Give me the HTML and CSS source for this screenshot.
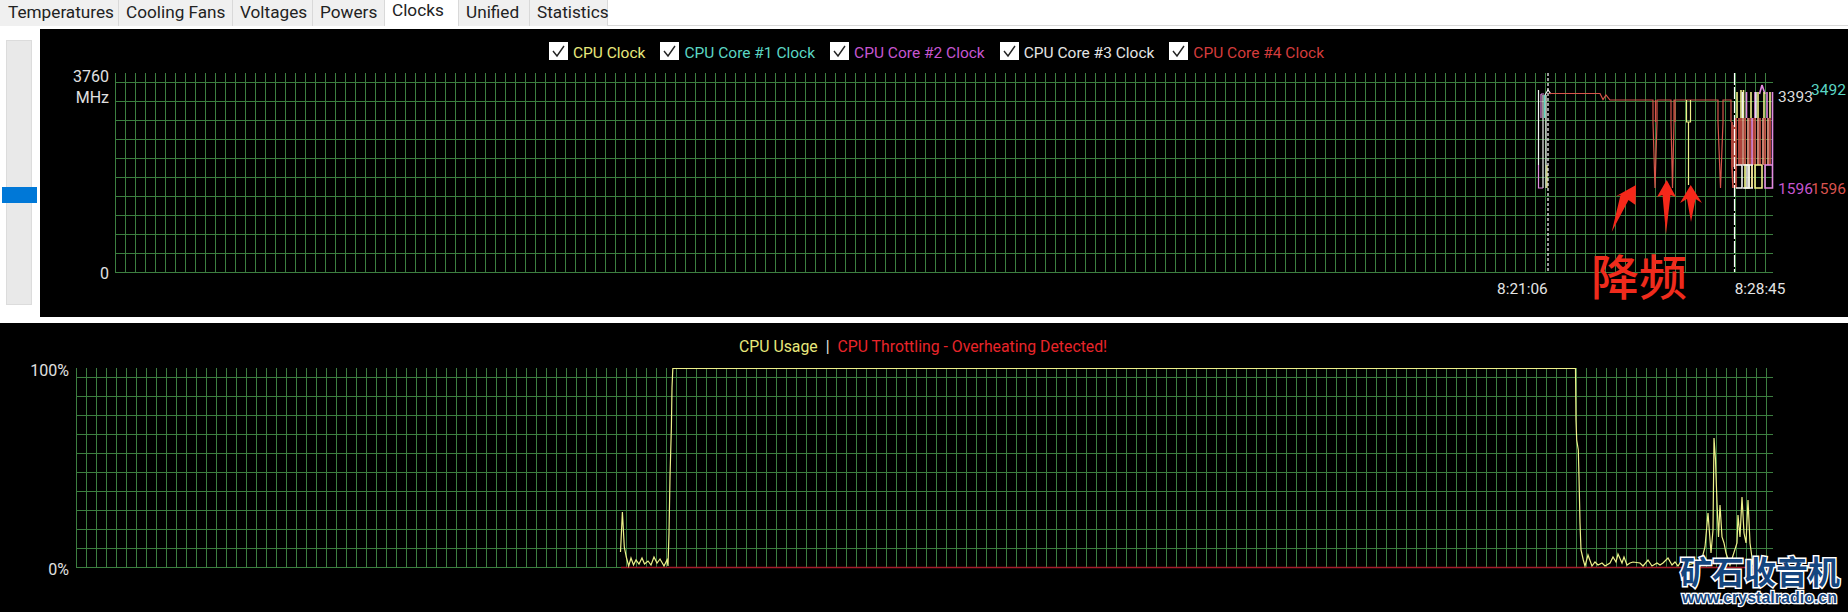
FILE: index.html
```html
<!DOCTYPE html>
<html lang="en">
<head>
  <meta charset="UTF-8">
  <title>Clocks</title>
  <link rel="stylesheet" href="styles.css">
</head>
<body>
  <div class="tabs">
    <div class="tab">Temperatures</div>
    <div class="tab">Cooling Fans</div>
    <div class="tab">Voltages</div>
    <div class="tab">Powers</div>
    <div class="tab active">Clocks</div>
    <div class="tab">Unified</div>
    <div class="tab">Statistics</div>
  </div>

  <div class="clockRow">
    <div class="sliderCol">
      <div class="track"></div>
      <div class="thumb"></div>
    </div>
    <div class="panel clockPanel">
      <div class="legend">
        <span class="item yellow"><svg class="box" viewBox="0 0 19 18"><path d="M4 9l4 5 7-10"/></svg>CPU Clock</span>
        <span class="item cyan"><svg class="box" viewBox="0 0 19 18"><path d="M4 9l4 5 7-10"/></svg>CPU Core #1 Clock</span>
        <span class="item magenta"><svg class="box" viewBox="0 0 19 18"><path d="M4 9l4 5 7-10"/></svg>CPU Core #2 Clock</span>
        <span class="item white"><svg class="box" viewBox="0 0 19 18"><path d="M4 9l4 5 7-10"/></svg>CPU Core #3 Clock</span>
        <span class="item red"><svg class="box" viewBox="0 0 19 18"><path d="M4 9l4 5 7-10"/></svg>CPU Core #4 Clock</span>
      </div>
      <div class="plotRow">
        <div class="yAxis">
          <div>3760</div>
          <div>MHz</div>
          <div class="zero">0</div>
        </div>
        <div class="plot clockPlot">
          <svg class="lines" viewBox="115 73 1658 200">
            <!-- first burst -->
            <path class="l-white" d="M1538.500 90V165M1543 95V188M1546 95V188"/>
            <path class="l-pink" d="M1538.500 165V188H1543M1541 94V118M1544 94H1541"/>
            <path class="l-cyan" d="M1544.500 95V118"/>
            <path class="l-yellow" d="M1547 165V188"/>
            <path class="l-white" d="M1545 95L1548 90L1551 94"/>
            <!-- long flat red run with dips -->
            <path class="l-red" d="M1549 93.500H1600L1603 99.500L1606 95L1610 100H1653V122L1655 188L1657 122V100H1671V122L1672.500 188L1674 122V100H1718V122L1720.500 188L1723 122V100H1731V122"/>
            <path class="l-red" d="M1655.500 100V122M1675 100V122"/>
            <path class="l-yellow" d="M1686.500 100V122H1690.500V100M1688.500 122V185"/>
            <!-- last burst -->
            <g class="burst">
              <path class="l-red" d="M1732 122V167L1733 188M1734 125V167M1736 118V188M1739 118V165M1741 118V165M1745 118V165M1750 118V165M1755 118V165M1760 118V165M1765 118V165M1770 118V165M1753 118V165"/>
              <path class="l-salmon" d="M1743 118V165M1748 118V165M1758 118V165M1763 118V165M1768 118V165"/>
              <path class="l-pink" d="M1746.500 92V118M1755 92V118M1762 85L1759.500 94M1762 85L1765 94M1772.500 92V188H1765V165H1772.500M1752 118V188M1767 92V118"/>
              <path class="l-yellow" d="M1737 92V118M1741 90V118M1743.500 90V118M1751 92V118M1758 92V118M1764 92V118M1770 92V118M1762 165V188H1755V165H1762M1745 165V188H1749V165ZM1752 165V188"/>
              <path class="l-white" d="M1736 165H1742V188H1736M1743 165H1753M1743 188H1753M1747 165V188M1756 92V118M1742.500 92V118M1749 165V188"/>
            </g>
            <path class="l-dash1" d="M1548 73V272"/>
            <path class="l-dash2" d="M1734.500 73V272"/>
            <!-- arrows -->
            <path class="arrow" d="M1636 185L1635.500 205L1628.500 200L1611.700 232L1620.500 195L1615.500 196.500Z"/>
            <path class="arrow" d="M1666.700 180L1676 197L1670.500 195L1666 234L1662.500 195L1657 197Z"/>
            <path class="arrow" d="M1690.700 185L1702 203L1695.500 199L1691 222L1687 199L1680 203Z"/>
          </svg>
          <span class="tag tag-white tag-a">3393</span>
          <span class="tag tag-cyan tag-b">3492</span>
          <span class="tag tag-magenta tag-c">1596</span>
          <span class="tag tag-red tag-d">1596</span>
          <span class="jiangpin">降频</span>
        </div>
      </div>
      <div class="xAxis">
        <span>8:21:06</span>
        <span>8:28:45</span>
      </div>
    </div>
  </div>

  <div class="panel usagePanel">
    <div class="usageTitle">
      <span class="yellow">CPU Usage</span>
      <span class="white">|</span>
      <span class="brightRed">CPU Throttling - Overheating Detected!</span>
    </div>
    <div class="plotRow">
      <div class="yAxis usageAxis">
        <div>100%</div>
        <div class="zero">0%</div>
      </div>
      <div class="plot usagePlot">
        <svg class="lines" viewBox="76 368 1697 200">
          <path class="l-throttle" d="M621 567.500H1773"/>
          <path class="l-usage" d="M620.500 552L622.400 512L624.300 547L626.300 557L628.700 566L631 558L633.500 565L636 560L639 564L642 558L644.500 564L648 561L651 565L654 557L657 563L660 559L664 566L667 560L668 566L669 533L670 477L671.400 427L672 388L672.800 368.500H1575.500L1576 420L1576.700 440L1578.300 450L1579 477L1580 523L1581 550L1583.300 560L1585 566L1588 555L1592 566L1595 562L1598 565L1602 563L1605 566L1610 563L1613 557L1616 562L1618 554L1622 563L1624 557L1627 565L1630 563L1633 562L1640 563L1643 566L1648 560L1652 566L1657 563L1660 565L1663 563L1668 558L1672 565L1675 562L1678 566L1682 560L1687 565L1695 563L1700 566L1705 547L1708 513L1711 553L1713 530L1714 438L1715.500 460L1717 503L1718.500 537L1720 505L1722 537L1724 543L1726 553L1730 565L1737 543L1738 515L1740 537L1742 497L1744 533L1746 543L1748 500L1750 543L1753 565"/>
        </svg>
      </div>
    </div>
  </div>

  <div class="watermark">
    <div class="wmTitle">矿石收音机</div>
    <div class="wmUrl">www.crystalradio.cn</div>
  </div>
</body>
</html>
```

FILE: styles.css
```css
html, body { margin:0; padding:0; background:#fff; }
body { position:relative; width:1848px; height:614px; overflow:hidden; font-family:Roboto, "Liberation Sans", sans-serif; }

.tabs { display:grid; grid-template-columns:119px 114px 80px 72px 74px 71px 78px; height:25px; border-bottom:1px solid #d9d9d9; margin-bottom:3px; }
.tab { background:#f0f0f0; border-right:1px solid #d9d9d9; padding-left:7px; font-size:17.2px; line-height:24px; color:#222; white-space:nowrap; }
.tab:first-child { padding-left:8px; }
.tab.active { background:#fff; padding-left:7px; line-height:20px; height:26px; position:relative; }

.clockRow { display:flex; height:288px; margin-bottom:6px; }
.sliderCol { position:relative; width:40px; flex:none; padding:11px 8px 12px 6px; box-sizing:border-box; }
.track { width:26px; height:100%; background:#e9e9e9; border:1px solid #dcdcdc; box-sizing:border-box; }
.thumb { position:absolute; left:2px; top:158px; width:35px; height:16px; background:#0078d7; }

.panel { background:#000; color:#ddd; flex:1; font-size:15px; }
.clockPanel { padding-top:13px; box-sizing:border-box; }
.usagePanel { height:289px; padding-top:14px; box-sizing:border-box; }

.legend { display:flex; gap:15px; padding-left:509px; height:18px; margin-bottom:13px; font-size:15.5px; line-height:22px; white-space:nowrap; }
.item { display:flex; gap:5px; }
.box { width:19px; height:18px; background:#fff; flex:none; }
.box path { fill:none; stroke:#222; stroke-width:1.4; }
.yellow { color:#e8e87c; }
.cyan { color:#5bd6c4; }
.magenta { color:#c656d0; }
.white { color:#e4e4e4; }
.red { color:#d33c3c; }
.brightRed { color:#e8252a; }

.plotRow { display:flex; gap:6px; }
.yAxis { position:relative; width:69px; height:200px; text-align:right; font-size:16px; line-height:21px; color:#e0e0e0; margin-top:-7px; }
.yAxis .zero { position:absolute; right:0; top:197px; }
.usageAxis { margin-top:-8px; margin-right:1px; }
.usageAxis .zero { top:199px; }

.plot { position:relative; height:200px; background-image:repeating-linear-gradient(to top, #3c7f40 0 1px, transparent 1px 19px), repeating-linear-gradient(to right, #3c7f40 0 1px, transparent 1px 10px); }
.clockPlot { width:1658px; }
.usagePlot { width:1697px; }
.lines { position:absolute; left:0; top:0; width:100%; height:100%; overflow:visible; }
.lines path { fill:none; stroke-width:1.2; }
.lines .burst path { stroke-width:1.6; }
.lines .arrow { fill:#f5281a; stroke:none; }
.l-white { stroke:#f2f2f2; }
.l-pink { stroke:#e28ce0; }
.l-cyan { stroke:#5bd6c4; }
.l-yellow { stroke:#f0ef8a; }
.l-red { stroke:#d8554a; }
.l-salmon { stroke:#f0a08c; }
.l-dash1 { stroke:#fff; stroke-dasharray:3 2; }
.l-dash2 { stroke:#fff; stroke-dasharray:12 2; }
.lines .l-throttle { stroke:#a31c2a; stroke-width:1.6; }
.l-usage { stroke:#eef08a; }

.tag { position:absolute; font-size:15.5px; line-height:20px; }
.tag-white { color:#ddd; }
.tag-cyan { color:#5bd6c4; }
.tag-magenta { color:#c656d0; }
.tag-red { color:#d9534f; }
.tag-a { left:1663px; top:12px; margin-top:2px; }
.tag-b { left:1696px; top:7px; }
.tag-c { left:1663px; top:106px; }
.tag-d { left:1696px; top:106px; }
.jiangpin { position:absolute; left:1476px; top:173px; font-family:"Noto Sans CJK SC", sans-serif; font-weight:500; font-size:48px; line-height:56px; color:#ef2b1c; }

.xAxis { display:flex; gap:187px; padding-left:1457px; margin-top:6px; font-size:15.4px; line-height:20px; color:#e4e4e4; }

.usageTitle { display:flex; gap:8px; padding-left:739px; height:20px; margin-bottom:11px; font-size:15.8px; line-height:20px; white-space:nowrap; }

.watermark { position:absolute; left:1680px; top:551px; font-family:"Noto Sans CJK SC", sans-serif; font-weight:700; color:#15467f; paint-order:stroke fill; -webkit-text-stroke:3px #fff; }
.wmTitle { font-size:32px; line-height:38px; }
.wmUrl { font-family:"Liberation Sans", sans-serif; font-size:16px; line-height:18px; padding-left:2px; -webkit-text-stroke:2.5px #fff; }
```
